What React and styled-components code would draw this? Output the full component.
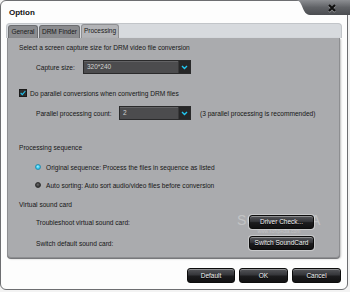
import { createGlobalStyle, styled } from 'styled-components'

// style///////////////////////////
const GlobalStyle = createGlobalStyle`
  html, body {
    margin: 0;
    padding: 0;
    background: #f3f3f3;
  }
  body {
    font-family: "Liberation Sans", Arial, sans-serif;
    color: #1c1c1c;
  }
`

const Window = styled.div`
  position: relative;
  width: 348px;
  height: 290px;
  box-sizing: border-box;
  border: 1px solid #6d6e71;
  border-radius: 6px;
  background: #fdfdfd;
  display: flex;
  flex-direction: column;
`

const TitleBar = styled.div`
  height: 22px;
  display: flex;
  justify-content: space-between;
  align-items: flex-start;
`

const Title = styled.div`
  margin: 7px 0 0 8px;
  font-size: 8px;
  line-height: 10px;
  font-weight: bold;
  color: #111;
`

const CloseTab = styled.div`
  width: 54px;
  height: 16px;
  margin: -1px -3px 0 0;
  display: flex;

  svg {
    display: block;
  }
`

const TabStrip = styled.div`
  height: 15px;
  margin: 0 5px;
  padding-left: 1px;
  box-sizing: border-box;
  background: #d7dade;
  border: 1px solid #c2c5c9;
  border-bottom: none;
  border-radius: 4px 4px 0 0;
  display: flex;
  align-items: flex-end;
  gap: 1px;
`

const Tab = styled.div`
  width: ${(p) => p.$w}px;
  height: ${(p) => (p.$active ? 14 : 13)}px;
  box-sizing: border-box;
  border: 1px solid ${(p) => (p.$active ? '#8f9093' : '#6c6d70')};
  border-bottom: none;
  border-radius: 3px 3px 0 0;
  background: ${(p) => (p.$active ? '#b3b4b7' : '#8b8c8f')};
  font-size: 6.5px;
  line-height: 12px;
  text-align: center;
  color: #1a1a1a;
  white-space: nowrap;
`

const Panel = styled.div`
  height: 220px;
  margin: 0 7px 0 6px;
  padding-left: 11px;
  box-sizing: border-box;
  background: #aaabae;
  border: 1px solid #8d8e91;
  border-top: none;
  border-radius: 0 0 4px 4px;
  box-shadow: 0 1px 0 #77787b, 1px 1px 2px rgba(0, 0, 0, 0.25);
  display: flex;
  flex-direction: column;
`

const Row = styled.div`
  height: ${(p) => p.$h}px;
  margin-top: ${(p) => p.$mt}px;
  padding-left: ${(p) => p.$indent || 0}px;
  display: flex;
  align-items: center;
  font-size: 6.6px;
  color: #161616;
  white-space: nowrap;
`

const Label = styled.span`
  width: ${(p) => (p.$w ? `${p.$w}px` : 'auto')};
  flex-shrink: 0;
`

const Note = styled.span`
  margin-left: 9px;
`

const Select = styled.div`
  width: ${(p) => p.$w}px;
  height: 14px;
  box-sizing: border-box;
  border: 1px solid #2a2a2b;
  background: #4c4c4e;
  box-shadow: inset 0 1px 0 #636365;
  display: flex;
  align-items: stretch;
`

const SelectValue = styled.span`
  flex: 1;
  padding-left: 3px;
  line-height: 12px;
  color: #d2d2d2;
  font-size: 6.5px;
`

const SelectArrow = styled.span`
  width: 11px;
  background: #262627;
  border-left: 1px solid #39393a;
  display: flex;
  align-items: center;
  justify-content: center;
`

const CheckBox = styled.span`
  width: 8px;
  height: 8px;
  box-sizing: border-box;
  margin-right: 3px;
  background: #2c2c2d;
  border: 1px solid #1a1a1a;
  display: flex;
  align-items: center;
  justify-content: center;
  overflow: visible;
`

const Radio = styled.span`
  width: 6px;
  height: 6px;
  box-sizing: border-box;
  margin: 0 5px 0 0;
  border-radius: 50%;
  border: 1px solid ${(p) => (p.$on ? '#2a8fb0' : '#2e2e2f')};
  background: ${(p) =>
    p.$on
      ? 'radial-gradient(circle at 45% 40%, #b8f1ff 0, #3fd2f6 45%, #17a8d6 100%)'
      : 'radial-gradient(circle at 45% 40%, #6a6a6b 0, #3a3a3b 60%)'};
`

const Button = styled.button`
  position: relative;
  z-index: 1;
  width: ${(p) => p.$w}px;
  height: ${(p) => p.$h || 14}px;
  padding: 0;
  box-sizing: border-box;
  border: 1px solid #0c0c0c;
  border-radius: 3px;
  background: linear-gradient(#55565a 0%, #35363a 45%, #1c1c1e 55%, #111112 100%);
  box-shadow: inset 0 1px 0 rgba(255, 255, 255, 0.35), 0 0 0 1px rgba(255, 255, 255, 0.35);
  color: #f2f2f2;
  font-family: "Liberation Sans", Arial, sans-serif;
  font-size: 6.5px;
  line-height: 12px;
  text-shadow: 0 1px 0 #000;
  white-space: nowrap;
  cursor: pointer;
`

const Footer = styled.div`
  margin-top: 10px;
  padding-right: 6px;
  display: flex;
  justify-content: flex-end;
  gap: 4px;
`

const Watermark = styled.div`
  position: absolute;
  z-index: 0;
  left: 236px;
  top: 211px;
  display: flex;
  flex-direction: column;
  align-items: center;
  pointer-events: none;
  color: rgba(255, 255, 255, 0.3);
  font-family: "Liberation Sans", Arial, sans-serif;

  b {
    font-size: 14px;
    line-height: 16px;
    font-weight: normal;
    letter-spacing: 0.5px;
  }
  span {
    font-size: 5px;
    line-height: 6px;
  }
`

// parts//////////////////////////
function Chevron() {
  return (
    <svg width="7" height="5" viewBox="0 0 7 5">
      <path d="M1 1 L3.5 3.5 L6 1" fill="none" stroke="#22c6f0" strokeWidth="1.4" />
    </svg>
  )
}

function Dropdown({ width, value }) {
  return (
    <Select $w={width}>
      <SelectValue>{value}</SelectValue>
      <SelectArrow>
        <Chevron />
      </SelectArrow>
    </Select>
  )
}

function CloseShape() {
  return (
    <svg width="54" height="16" viewBox="0 0 54 16">
      <defs>
        <linearGradient id="ct" x1="0" y1="0" x2="0" y2="1">
          <stop offset="0" stopColor="#8c8e92" />
          <stop offset="0.5" stopColor="#606266" />
          <stop offset="1" stopColor="#4b4d51" />
        </linearGradient>
      </defs>
      <path d="M0 0 C7 0 6 15 14 15 L54 15 L54 0 Z" fill="url(#ct)" />
      <path d="M33 5 L39 11 M39 5 L33 11" stroke="#ffffff" strokeOpacity="0.35" strokeWidth="2.2" transform="translate(0 1)" />
      <path d="M33 5 L39 11 M39 5 L33 11" stroke="#0e0e0e" strokeWidth="2" />
    </svg>
  )
}

export default function App() {
  return (
    <>
      <GlobalStyle />
      <Window>
        <TitleBar>
          <Title>Option</Title>
          <CloseTab>
            <CloseShape />
          </CloseTab>
        </TitleBar>

        <TabStrip>
          <Tab $w={30}>General</Tab>
          <Tab $w={41}>DRM Finder</Tab>
          <Tab $w={38} $active>
            Processing
          </Tab>
        </TabStrip>

        <Panel>
          <Row $h={11} $mt={4}>
            Select a screen capture size for DRM video file conversion
          </Row>
          <Row $h={14} $mt={7} $indent={17}>
            <Label $w={47}>Capture size:</Label>
            <Dropdown width={108} value="320*240" />
          </Row>
          <Row $h={12} $mt={13}>
            <CheckBox>
              <svg width="9" height="8" viewBox="0 0 9 8">
                <path d="M1 4 L3.5 6.5 L8 1" fill="none" stroke="#22c6f0" strokeWidth="1.6" />
              </svg>
            </CheckBox>
            Do parallel conversions when converting DRM files
          </Row>
          <Row $h={14} $mt={7} $indent={17}>
            <Label $w={83}>Parallel processing count:</Label>
            <Dropdown width={72} value="2" />
            <Note>(3 parallel processing is recommended)</Note>
          </Row>
          <Row $h={12} $mt={21}>
            Processing sequence
          </Row>
          <Row $h={12} $mt={8} $indent={16}>
            <Radio $on />
            Original sequence: Process the files in sequence as listed
          </Row>
          <Row $h={12} $mt={6} $indent={16}>
            <Radio />
            Auto sorting: Auto sort audio/video files before conversion
          </Row>
          <Row $h={12} $mt={7}>
            Virtual sound card
          </Row>
          <Row $h={14} $mt={5} $indent={17}>
            <Label $w={213}>Troubleshoot virtual sound card:</Label>
            <Button $w={65}>Driver Check...</Button>
          </Row>
          <Row $h={14} $mt={7} $indent={17}>
            <Label $w={213}>Switch default sound card:</Label>
            <Button $w={65}>Switch SoundCard</Button>
          </Row>
        </Panel>

        <Footer>
          <Button $w={48} $h={15}>
            Default
          </Button>
          <Button $w={49} $h={15}>
            OK
          </Button>
          <Button $w={49} $h={15}>
            Cancel
          </Button>
        </Footer>

        <Watermark>
          <b>SOFTPEDIA</b>
          <span>www.softpedia.com</span>
        </Watermark>
      </Window>
    </>
  )
}
